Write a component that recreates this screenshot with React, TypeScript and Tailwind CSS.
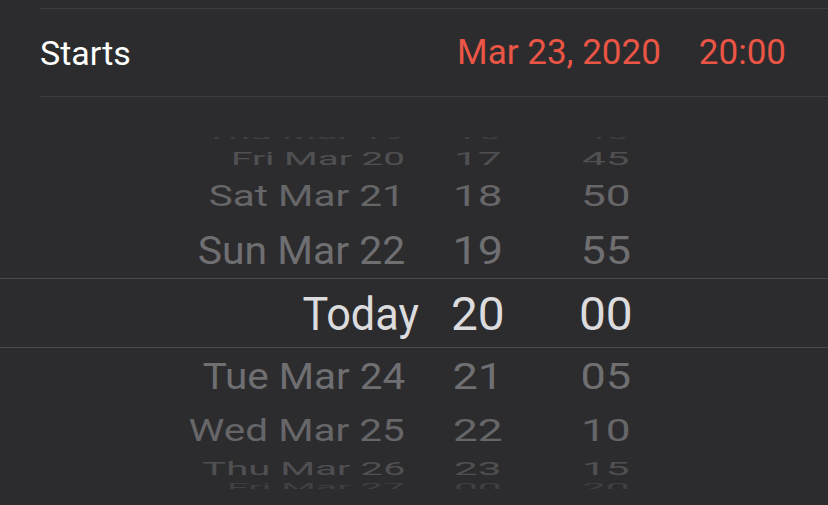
import React from 'react';

type WheelRow = {
  date: string;
  hour: string;
  min: string;
  row: string;
  inner: string;
  text: string;
  num: string;
  dateShift: string;
};

const rows: WheelRow[] = [
  { date: 'Thu Mar 19', hour: '16', min: '40', row: 'h-[9px] overflow-hidden', inner: 'h-[24px] -mt-[15px]', text: 'scale-x-[0.86] scale-y-[0.3] text-[#404043]', num: 'scale-x-[0.92] scale-y-[0.3] text-[#404043]', dateShift: '' },
  { date: 'Fri Mar 20', hour: '17', min: '45', row: 'h-[24px]', inner: 'h-[24px]', text: 'scale-x-[0.84] scale-y-[0.41] text-[#505053]', num: 'scale-x-[0.92] scale-y-[0.41] text-[#505053]', dateShift: '' },
  { date: 'Sat Mar 21', hour: '18', min: '50', row: 'h-[52px]', inner: 'h-[52px]', text: 'scale-x-[0.88] scale-y-[0.65] text-[#666669]', num: 'scale-x-[0.96] scale-y-[0.65] text-[#666669]', dateShift: '' },
  { date: 'Sun Mar 22', hour: '19', min: '55', row: 'h-[56px]', inner: 'h-[56px]', text: 'scale-x-[0.89] scale-y-[0.85] text-[#6f6f72]', num: 'scale-x-[0.98] scale-y-[0.85] text-[#6f6f72]', dateShift: '' },
  { date: 'Today', hour: '20', min: '00', row: 'h-[70px] border-y border-[#4a4a4d]', inner: 'h-[68px] translate-y-[1px]', text: 'scale-x-[0.94] text-[#dcdcde]', num: 'scale-x-[1.04] text-[#dcdcde]', dateShift: 'translate-x-[14px]' },
  { date: 'Tue Mar 24', hour: '21', min: '05', row: 'h-[56px]', inner: 'h-[56px]', text: 'scale-x-[0.88] scale-y-[0.82] text-[#6f6f72]', num: 'scale-x-[0.98] scale-y-[0.82] text-[#6f6f72]', dateShift: '' },
  { date: 'Wed Mar 25', hour: '22', min: '10', row: 'h-[52px]', inner: 'h-[52px]', text: 'scale-x-[0.88] scale-y-[0.7] text-[#666669]', num: 'scale-x-[0.96] scale-y-[0.7] text-[#666669]', dateShift: '' },
  { date: 'Thu Mar 26', hour: '23', min: '15', row: 'h-[24px]', inner: 'h-[24px]', text: 'scale-x-[0.87] scale-y-[0.41] text-[#505053]', num: 'scale-x-[0.92] scale-y-[0.41] text-[#505053]', dateShift: '' },
  { date: 'Fri Mar 27', hour: '00', min: '20', row: 'h-[9px] overflow-hidden', inner: 'h-[14px]', text: 'scale-x-[0.86] scale-y-[0.22] text-[#404043]', num: 'scale-x-[0.92] scale-y-[0.22] text-[#404043]', dateShift: '' },
];

export default function App() {
  return (
    <div className="w-[828px] h-[505px] overflow-hidden bg-[#2c2c2e] font-['Roboto','Liberation_Sans',sans-serif]">
      <div className="h-2" />
      <div className="ml-10 flex h-[89px] items-center justify-between border-y border-[#3d3d40] pr-[42px] leading-none">
        <span className="text-[34px] text-white">Starts</span>
        <div className="flex gap-[38px] text-[35px] text-[#eb5545]">
          <span>Mar 23, 2020</span>
          <span>20:00</span>
        </div>
      </div>

      <div className="h-10" />
      <div className="text-[46px] leading-none">
        {rows.map((r, i) => (
          <div key={i} className={r.row}>
            <div className={'flex items-center ' + r.inner}>
              <div className="w-[405px] text-right">
                <span className={'inline-block origin-right whitespace-nowrap ' + r.text + ' ' + r.dateShift}>{r.date}</span>
              </div>
              <div className="ml-[35px] w-[76px] text-center">
                <span className={'inline-block ' + r.num}>{r.hour}</span>
              </div>
              <div className="ml-[52px] w-[76px] text-center">
                <span className={'inline-block ' + r.num}>{r.min}</span>
              </div>
            </div>
          </div>
        ))}
      </div>
    </div>
  );
}
